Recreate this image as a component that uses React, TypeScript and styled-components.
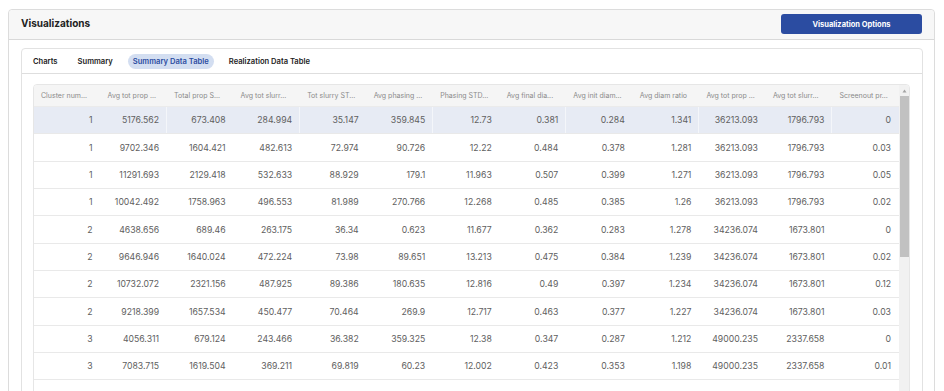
import React from "react";
import styled, { createGlobalStyle } from "styled-components";

const Global = createGlobalStyle`
  html, body { margin: 0; padding: 0; background: #ffffff; overflow: hidden; }
  body { font-family: Inter, "Noto Sans", sans-serif; color: #333; }
  * { box-sizing: border-box; }
`;

const Page = styled.div`
  padding: 9px 9px 0 8px;
  height: 391px;
  overflow: hidden;
`;

const OuterCard = styled.section`
  border: 1px solid #dcdcdc;
  border-radius: 4px;
  background: #ffffff;
  height: 420px;
`;

const CardHeader = styled.header`
  height: 30px;
  background: #f7f7f7;
  border-bottom: 1px solid #d9d9d9;
  border-radius: 4px 4px 0 0;
  display: flex;
  align-items: center;
  justify-content: space-between;
  padding: 0 12px 0 12px;
`;

const Title = styled.h2`
  margin: 0 0 4px 0;
  font-size: 10px;
  font-weight: 700;
  color: #222;
`;

const PrimaryButton = styled.button`
  width: 141px;
  height: 20px;
  border: none;
  border-radius: 3px;
  background: #2b4ca1;
  color: #ffffff;
  font-family: Inter, sans-serif;
  font-size: 7.5px;
  font-weight: 700;
  padding: 0;
  margin-bottom: 1px;
`;

const CardBody = styled.div`
  padding: 8px 11px 0 12px;
`;

const InnerCard = styled.div`
  border: 1px solid #e2e2e2;
  border-radius: 4px;
  background: #ffffff;
  height: 400px;
`;

const TabBar = styled.nav`
  height: 25px;
  border-bottom: 1px solid #dedede;
  display: flex;
  align-items: center;
  gap: 10px;
  padding: 0 0 0 6px;
`;

const Tab = styled.div<{ $active?: boolean }>`
  height: 15px;
  padding: 0 5px;
  border-radius: 8px;
  display: flex;
  align-items: center;
  font-size: 7.6px;
  font-weight: 600;
  color: ${(p) => (p.$active ? "#2b4ca1" : "#222")};
  background: ${(p) => (p.$active ? "#d3def1" : "transparent")};
`;

const TableArea = styled.div`
  padding: 10px 12px 0 11px;
`;

const TableFrame = styled.div`
  border: 1px solid #e6e6e6;
  border-radius: 4px;
  display: flex;
  overflow: hidden;
  height: 340px;
`;

const Grid = styled.div`
  flex: 1;
  display: flex;
  flex-direction: column;
`;

const HeaderRow = styled.div`
  display: grid;
  grid-template-columns: repeat(13, 1fr);
  height: 22px;
  background: #f5f5f5;
  border-bottom: 1px solid #ebebeb;
`;

const HeaderCell = styled.div`
  display: flex;
  align-items: center;
  padding-left: 7px;
  font-size: 7px;
  color: #8a8a8a;
  white-space: nowrap;
  overflow: hidden;
`;

const Row = styled.div<{ $selected?: boolean }>`
  display: grid;
  grid-template-columns: repeat(13, 1fr);
  height: 27.35px;
  background: ${(p) => (p.$selected ? "#e7ebf4" : "#ffffff")};
  border-bottom: 1px solid #e9e9e9;
`;

const Cell = styled.div<{ $divider?: boolean }>`
  display: flex;
  align-items: center;
  justify-content: flex-end;
  padding-right: 7px;
  font-size: 8.7px;
  color: #606060;
  white-space: nowrap;
  border-right: 1px solid ${(p) => (p.$divider ? "rgba(255,255,255,0.55)" : "transparent")};
`;

const Scrollbar = styled.div`
  width: 10px;
  background: #f1f1f1;
  display: flex;
  flex-direction: column;
  align-items: center;
`;

const ScrollArrow = styled.div`
  height: 11px;
  display: flex;
  align-items: center;
  justify-content: center;
`;

const ScrollThumb = styled.div`
  width: 9px;
  height: 161px;
  background: #c1c1c1;
`;

const headers = [
  "Cluster num...",
  "Avg tot prop ...",
  "Total prop S...",
  "Avg tot slurr...",
  "Tot slurry ST...",
  "Avg phasing ...",
  "Phasing STD...",
  "Avg final dia...",
  "Avg init diam...",
  "Avg diam ratio",
  "Avg tot prop ...",
  "Avg tot slurr...",
  "Screenout pr...",
];

const rows: (string | number)[][] = [
  [1, "5176.562", "673.408", "284.994", "35.147", "359.845", "12.73", "0.381", "0.284", "1.341", "36213.093", "1796.793", "0"],
  [1, "9702.346", "1604.421", "482.613", "72.974", "90.726", "12.22", "0.484", "0.378", "1.281", "36213.093", "1796.793", "0.03"],
  [1, "11291.693", "2129.418", "532.633", "88.929", "179.1", "11.963", "0.507", "0.399", "1.271", "36213.093", "1796.793", "0.05"],
  [1, "10042.492", "1758.963", "496.553", "81.989", "270.766", "12.268", "0.485", "0.385", "1.26", "36213.093", "1796.793", "0.02"],
  [2, "4638.656", "689.46", "263.175", "36.34", "0.623", "11.677", "0.362", "0.283", "1.278", "34236.074", "1673.801", "0"],
  [2, "9646.946", "1640.024", "472.224", "73.98", "89.651", "13.213", "0.475", "0.384", "1.239", "34236.074", "1673.801", "0.02"],
  [2, "10732.072", "2321.156", "487.925", "89.386", "180.635", "12.816", "0.49", "0.397", "1.234", "34236.074", "1673.801", "0.12"],
  [2, "9218.399", "1657.534", "450.477", "70.464", "269.9", "12.717", "0.463", "0.377", "1.227", "34236.074", "1673.801", "0.03"],
  [3, "4056.311", "679.124", "243.466", "36.382", "359.325", "12.38", "0.347", "0.287", "1.212", "49000.235", "2337.658", "0"],
  [3, "7083.715", "1619.504", "369.211", "69.819", "60.23", "12.002", "0.423", "0.353", "1.198", "49000.235", "2337.658", "0.01"],
];

const tabs = ["Charts", "Summary", "Summary Data Table", "Realization Data Table"];

export default function App() {
  return (
    <>
      <Global />
      <Page>
        <OuterCard>
          <CardHeader>
            <Title>Visualizations</Title>
            <PrimaryButton>Visualization Options</PrimaryButton>
          </CardHeader>
          <CardBody>
            <InnerCard>
              <TabBar>
                {tabs.map((t) => (
                  <Tab key={t} $active={t === "Summary Data Table"}>
                    {t}
                  </Tab>
                ))}
              </TabBar>
              <TableArea>
                <TableFrame>
                  <Grid>
                    <HeaderRow>
                      {headers.map((h, i) => (
                        <HeaderCell key={i}>{h}</HeaderCell>
                      ))}
                    </HeaderRow>
                    {rows.map((r, ri) => (
                      <Row key={ri} $selected={ri === 0}>
                        {r.map((v, ci) => (
                          <Cell key={ci} $divider={ci % 2 === 1 && ci < 12}>
                            {v}
                          </Cell>
                        ))}
                      </Row>
                    ))}
                    <Row />
                  </Grid>
                  <Scrollbar>
                    <ScrollArrow>
                      <svg width="5" height="4" viewBox="0 0 5 4">
                        <path d="M2.5 0.5 L4.5 3.5 L0.5 3.5 Z" fill="#a3a3a3" />
                      </svg>
                    </ScrollArrow>
                    <ScrollThumb />
                  </Scrollbar>
                </TableFrame>
              </TableArea>
            </InnerCard>
          </CardBody>
        </OuterCard>
      </Page>
    </>
  );
}
